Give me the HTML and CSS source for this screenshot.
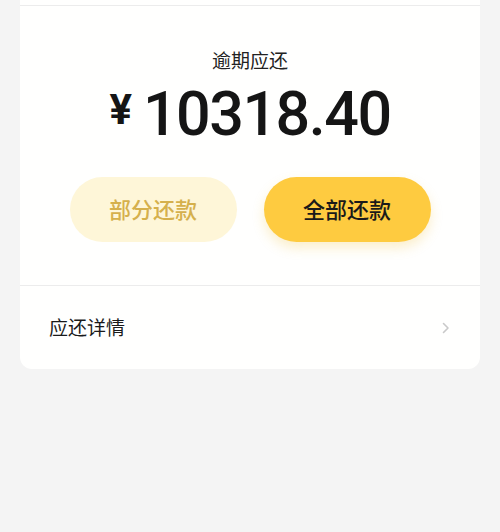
FILE: index.html
```html
<!DOCTYPE html>
<html lang="zh-CN">
<head>
    <meta charset="UTF-8">
    <meta name="viewport" content="width=device-width, initial-scale=1.0">
    <title>逾期应还</title>
    <link rel="stylesheet" href="styles.css">
</head>
<body>
    <main class="card">
        <div class="card-top"></div>
        <section class="summary">
            <div class="summary-label">逾期应还</div>
            <div class="amount"><span class="currency">¥</span>10318.40</div>
            <div class="actions">
                <button class="btn btn-partial">部分还款</button>
                <button class="btn btn-full">全部还款</button>
            </div>
        </section>
        <a class="detail-row" href="#">
            <span>应还详情</span>
            <svg class="chevron" width="8" height="12" viewBox="0 0 8 12">
                <path d="M1.5 1.5 L6 6 L1.5 10.5" fill="none" stroke="#c9c9c9" stroke-width="1.6" stroke-linecap="round" stroke-linejoin="round"/>
            </svg>
        </a>
    </main>
</body>
</html>
```

FILE: styles.css
```css
body {
    margin: 0;
    padding: 0 20px;
    background-color: #f4f4f4;
    font-family: "Noto Sans CJK SC", "Noto Sans", sans-serif;
    color: #1a1a1a;
}
.card {
    display: block;
    background-color: #fffffe;
    border-radius: 0 0 12px 12px;
}
.card-top {
    height: 5px;
    border-bottom: 1px solid #ececec;
}
.summary {
    padding: 41px 0 43px;
    text-align: center;
    border-bottom: 1px solid #ececec;
}
.summary-label {
    font-size: 19px;
    line-height: 26px;
    color: #222;
}
.amount {
    height: 64px;
    margin-top: 9px;
    font-family: Roboto, "Noto Sans", sans-serif;
    font-size: 61px;
    font-weight: 500;
    letter-spacing: -1.5px;
    line-height: 64px;
    color: #151515;
}
.currency {
    font-size: 42px;
    font-weight: 700;
    letter-spacing: 0;
    line-height: 1;
    margin-right: 11px;
    vertical-align: 11px;
}
.actions {
    display: flex;
    justify-content: center;
    gap: 27px;
    margin-top: 31px;
}
.btn {
    width: 167px;
    height: 65px;
    padding: 0 0 4px;
    border: none;
    border-radius: 33px;
    font-family: "Noto Sans CJK SC", sans-serif;
    font-size: 22px;
    font-weight: 500;
}
.btn-partial {
    background-color: #fef6d8;
    color: #d5b04c;
}
.btn-full {
    background-color: #fecb40;
    color: #1a1a1a;
    box-shadow: 0 6px 12px rgba(240, 190, 60, 0.25);
}
.detail-row {
    display: flex;
    align-items: center;
    justify-content: space-between;
    height: 83px;
    padding: 0 30px 3px 29px;
    box-sizing: border-box;
    text-decoration: none;
    color: #1a1a1a;
    font-size: 19px;
}
.chevron {
    display: block;
    margin-top: 3px;
}
```
